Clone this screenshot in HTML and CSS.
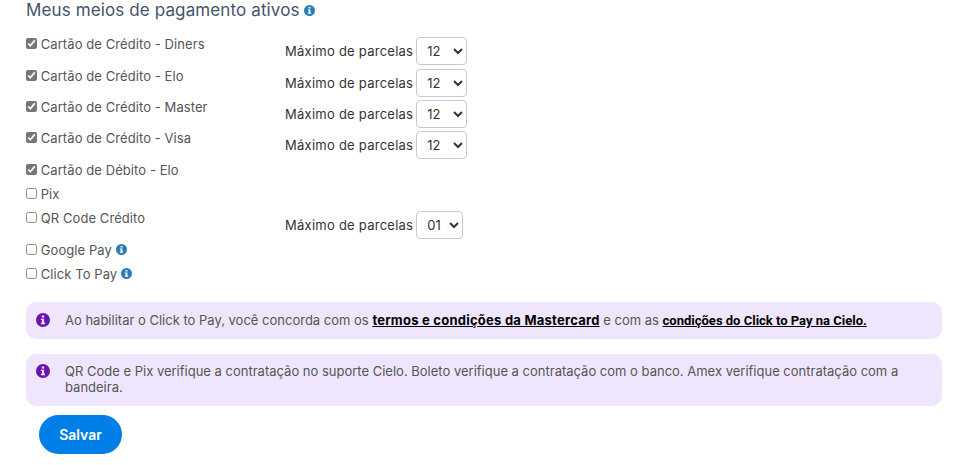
FILE: index.html
```html
<!DOCTYPE html>
<html lang="pt-BR">

<head>
    <meta charset="UTF-8">
    <meta name="viewport" content="width=device-width, initial-scale=1.0">
    <title>Meios de pagamento</title>
    <link rel="stylesheet" href="styles.css">
</head>

<body>
    <svg class="defs" width="0" height="0">
        <symbol id="info" viewBox="0 0 14 14">
            <path fill-rule="evenodd" d="M7 0a7 7 0 1 1 0 14A7 7 0 0 1 7 0zM5.8 2.4v2.2h2.4V2.4zM4.9 5.7v1.4h1v2.6h-1v1.5h4.2V9.7h-1V5.7z" />
        </symbol>
    </svg>

    <h2 class="title">Meus meios de pagamento ativos <svg class="icon icon-blue"><use href="#info" /></svg></h2>

    <div class="methods">
        <div class="method tall">
            <label class="check"><input type="checkbox" checked> Cartão de Crédito - Diners</label>
            <div class="parcelas">Máximo de parcelas
                <select class="select"><option>12</option></select>
            </div>
        </div>
        <div class="method tall">
            <label class="check"><input type="checkbox" checked> Cartão de Crédito - Elo</label>
            <div class="parcelas">Máximo de parcelas
                <select class="select"><option>12</option></select>
            </div>
        </div>
        <div class="method tall">
            <label class="check"><input type="checkbox" checked> Cartão de Crédito - Master</label>
            <div class="parcelas">Máximo de parcelas
                <select class="select"><option>12</option></select>
            </div>
        </div>
        <div class="method tall">
            <label class="check"><input type="checkbox" checked> Cartão de Crédito - Visa</label>
            <div class="parcelas">Máximo de parcelas
                <select class="select"><option>12</option></select>
            </div>
        </div>
        <div class="method">
            <label class="check"><input type="checkbox" checked> Cartão de Débito - Elo</label>
        </div>
        <div class="method mid">
            <label class="check"><input type="checkbox"> Pix</label>
        </div>
        <div class="method tall">
            <label class="check"><input type="checkbox"> QR Code Crédito</label>
            <div class="parcelas">Máximo de parcelas
                <select class="select select-small"><option>01</option></select>
            </div>
        </div>
        <div class="method">
            <label class="check"><input type="checkbox"> Google Pay <svg class="icon icon-blue"><use href="#info" /></svg></label>
        </div>
        <div class="method">
            <label class="check"><input type="checkbox"> Click To Pay <svg class="icon icon-blue"><use href="#info" /></svg></label>
        </div>
    </div>

    <div class="alert">
        <svg class="icon icon-purple"><use href="#info" /></svg>
        <p>Ao habilitar o Click to Pay, você concorda com os <a class="link" href="#">termos e condições da Mastercard</a> e com as <a class="link link-alt" href="#">condições do Click to Pay na Cielo.</a></p>
    </div>
    <div class="alert">
        <svg class="icon icon-purple"><use href="#info" /></svg>
        <p>QR Code e Pix verifique a contratação no suporte Cielo. Boleto verifique a contratação com o banco. Amex verifique contratação com a bandeira.</p>
    </div>

    <button class="save">Salvar</button>
</body>

</html>
```

FILE: styles.css
```css
body {
    margin: 0;
    padding: 0 20px 0 26px;
    font-family: "Inter", "Open Sans", sans-serif;
    font-size: 13px;
    color: #555;
    background: #fff;
}

.defs {
    position: absolute;
}

.title {
    margin: 0;
    height: 36px;
    padding-top: 1px;
    font-size: 17px;
    line-height: 19px;
    font-weight: 400;
    color: #44546a;
    letter-spacing: 0.12px;
}

.icon {
    display: inline-block;
    fill: currentColor;
    width: 11px;
    height: 11px;
}

.icon-blue {
    color: #2a7db8;
}

.icon-purple {
    color: #6a12b0;
    flex: none;
    width: 14px;
    height: 14px;
}

.method {
    display: flex;
    align-items: flex-start;
    height: 24px;
}

.method.mid {
    height: 24.5px;
}

.method.tall {
    height: 31.4px;
}

.check {
    display: block;
    width: 259px;
    padding-top: 0.3px;
    line-height: 15px;
    letter-spacing: 0.08px;
}

.check input {
    width: 11px;
    height: 11px;
    margin: 0;
    vertical-align: 0;
    accent-color: #767676;
    opacity: 0.85;
}

.check input:checked {
    opacity: 1;
}

.parcelas {
    display: flex;
    align-items: center;
    gap: 3px;
    padding-top: 0.2px;
    color: #333;
    letter-spacing: 0.25px;
    white-space: nowrap;
}

.select {
    width: 51px;
    height: 28px;
    padding: 0 4px 0 6px;
    border: 1px solid #c3cbd8;
    border-radius: 4px;
    background: #fff;
    color: #333;
    font-family: inherit;
    font-size: 13px;
}

.select-small {
    width: 47px;
}

.methods {
    margin-bottom: 11.5px;
}

.alert {
    display: flex;
    gap: 15px;
    margin-bottom: 15px;
    padding: 10.7px 26px 10.7px 10px;
    border-radius: 10px;
    background: #efe6fd;
    line-height: 15.3px;
}

.alert p {
    margin: 0;
}

.link {
    color: #000;
    font-weight: 700;
    letter-spacing: 0.24px;
}

.link-alt {
    font-family: "Roboto", "Liberation Sans", sans-serif;
    letter-spacing: 0;
}

.save {
    display: block;
    width: 83px;
    height: 39px;
    margin: -6px 0 0 13px;
    border: 0;
    border-radius: 20px;
    background: #007fe8;
    color: #fff;
    font-family: inherit;
    font-size: 14px;
    font-weight: 600;
}
```
